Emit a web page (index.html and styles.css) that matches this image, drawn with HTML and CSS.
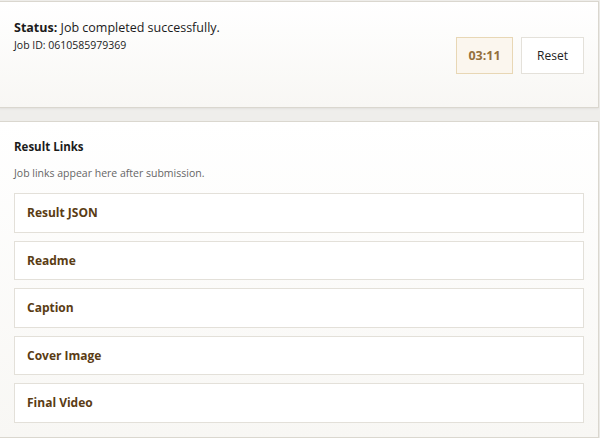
FILE: index.html
```html
<!DOCTYPE html>
<html lang="en">
<head>
    <meta charset="UTF-8">
    <meta name="viewport" content="width=device-width, initial-scale=1.0">
    <title>Job Status</title>
    <link rel="stylesheet" href="styles.css">
</head>
<body>
    <div class="page">
        <div class="panel status-panel">
            <div class="status-text">
                <p class="status-line"><strong>Status:</strong> Job completed successfully.</p>
                <p class="job-id">Job ID: 0610585979369</p>
            </div>
            <div class="status-actions">
                <span class="timer">03:11</span>
                <button class="reset-btn">Reset</button>
            </div>
        </div>

        <div class="panel links-panel">
            <h2>Result Links</h2>
            <p class="hint">Job links appear here after submission.</p>
            <div class="link-list">
                <a class="link-item" href="#">Result JSON</a>
                <a class="link-item" href="#">Readme</a>
                <a class="link-item" href="#">Caption</a>
                <a class="link-item" href="#">Cover Image</a>
                <a class="link-item" href="#">Final Video</a>
            </div>
        </div>
    </div>
</body>
</html>
```

FILE: styles.css
```css
body {
    margin: 0;
    background-color: #efeeeb;
    font-family: "Open Sans", "Noto Sans", Arial, sans-serif;
    color: #1b1b1b;
}
.page {
    margin-left: -1px;
    margin-right: 1px;
    padding-top: 1px;
    display: flex;
    flex-direction: column;
    gap: 13px;
}
.panel {
    border: 1px solid #dad7cf;
    background: linear-gradient(180deg, #ffffff 0%, #f8f7f4 100%);
    box-shadow: 0 1px 2px rgba(0, 0, 0, 0.06);
}
.status-panel {
    height: 107px;
    box-sizing: border-box;
    display: flex;
    justify-content: space-between;
    padding: 17px 14px 0 14px;
}
.status-line {
    margin: 0;
    font-size: 12.5px;
    line-height: 18px;
}
.job-id {
    margin: 0;
    font-size: 10.5px;
    line-height: 17px;
}
.status-actions {
    display: flex;
    gap: 8px;
    margin-top: 18px;
    height: 37px;
}
.timer {
    width: 55px;
    display: flex;
    align-items: center;
    justify-content: center;
    background-color: #fbf6ee;
    border: 1px solid #e8d7b5;
    color: #94703c;
    font-weight: 700;
    font-size: 12.5px;
}
.reset-btn {
    width: 63px;
    background-color: #ffffff;
    border: 1px solid #e4e1da;
    color: #222222;
    font-family: inherit;
    font-size: 12px;
    padding: 0;
}
.links-panel {
    padding: 16px 14px 16px 14px;
    height: 317px;
    box-sizing: border-box;
}
.links-panel h2 {
    margin: 0;
    font-size: 11.5px;
    font-weight: 700;
    line-height: 18px;
}
.hint {
    margin: 9px 0 12px;
    font-size: 10.5px;
    color: #666666;
    line-height: 16px;
}
.link-list {
    display: flex;
    flex-direction: column;
    gap: 8px;
}
.link-item {
    display: flex;
    align-items: center;
    height: 39.5px;
    box-sizing: border-box;
    padding: 0 12px;
    background-color: #ffffff;
    border: 1px solid #e3e0d9;
    color: #5a3c14;
    font-weight: 700;
    font-size: 12px;
    text-decoration: none;
}
```
